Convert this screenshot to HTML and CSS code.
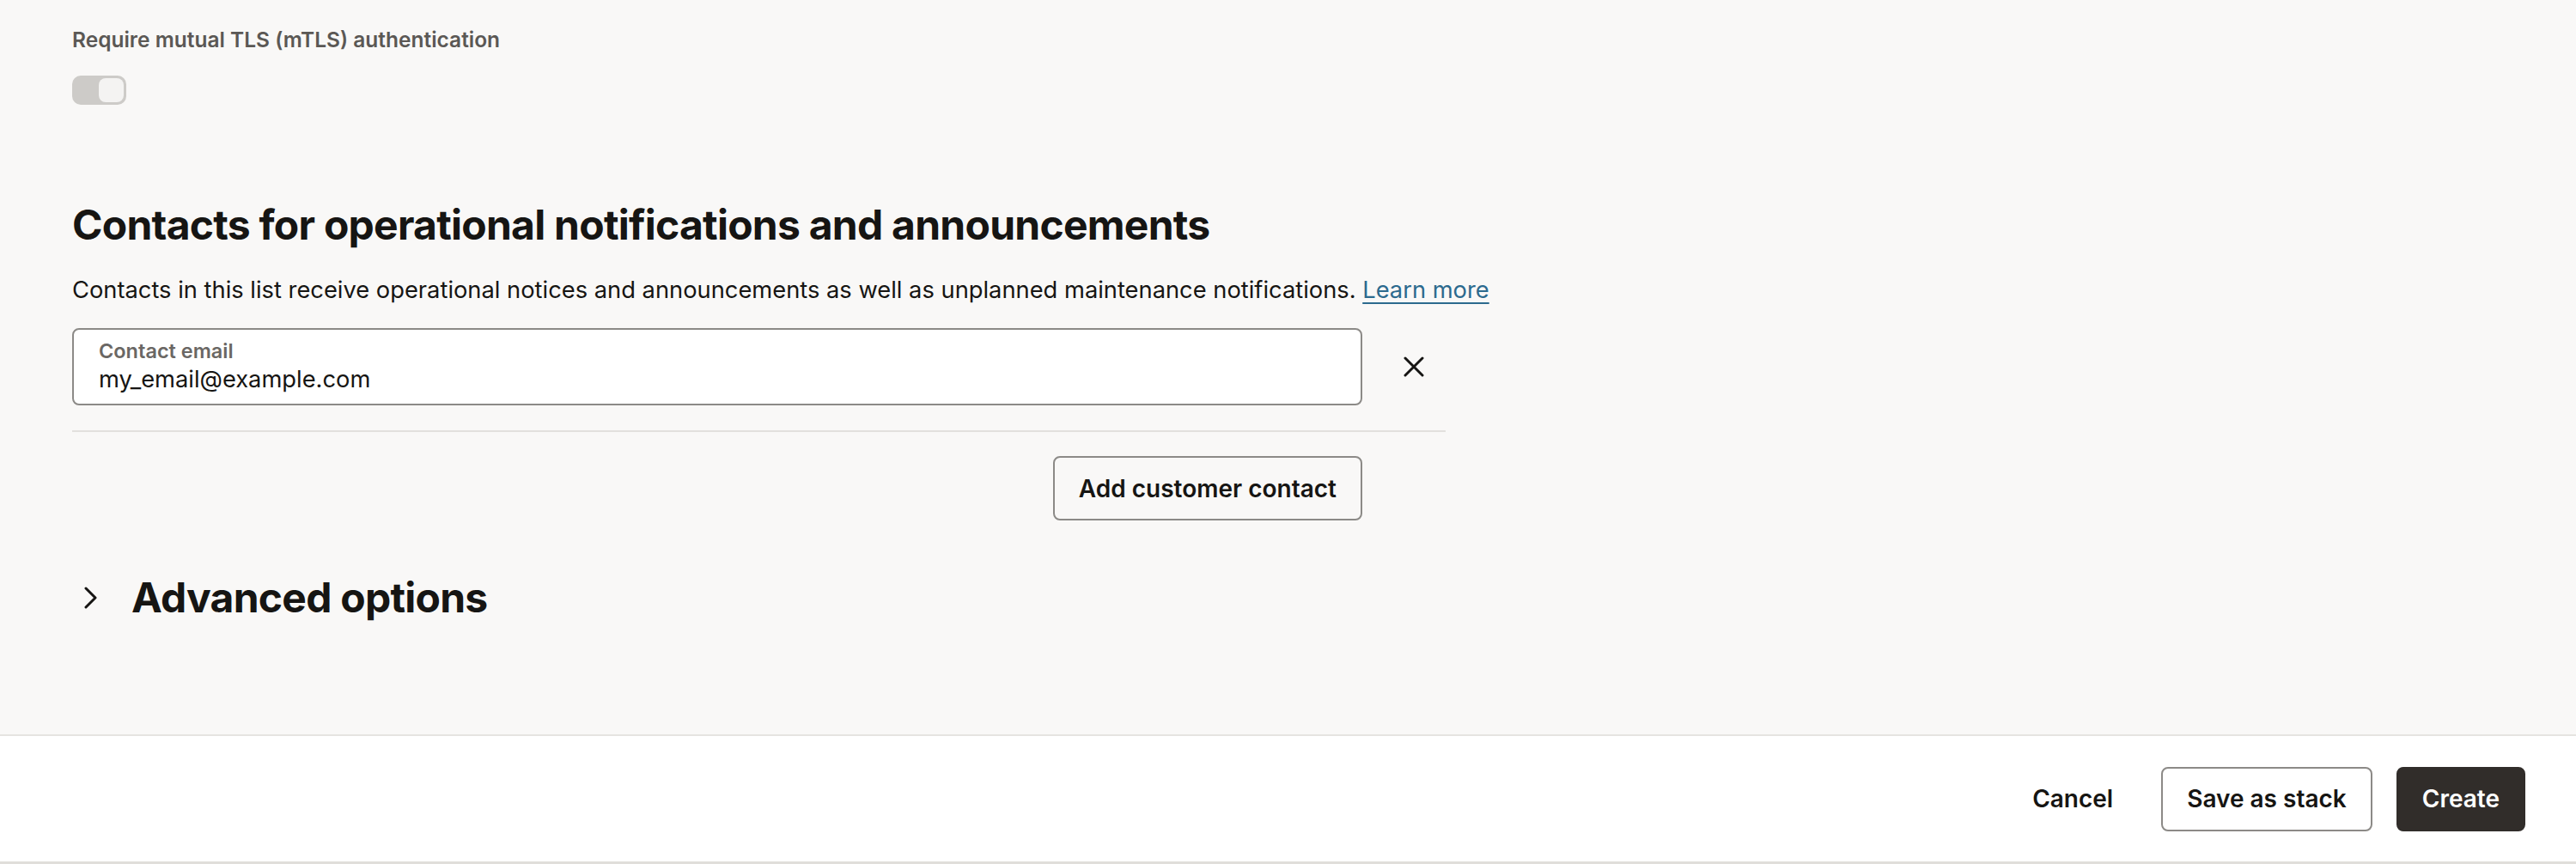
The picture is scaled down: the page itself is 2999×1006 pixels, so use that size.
FILE: index.html
```html
<!DOCTYPE html>
<html lang="en">
<head>
<meta charset="utf-8">
<title>Create</title>
<link rel="stylesheet" href="styles.css">
</head>
<body>
<div class="page">
  <main class="content">
    <section class="field">
      <div class="field-label">Require mutual TLS (mTLS) authentication</div>
      <div class="switch"><span class="knob"></span></div>
    </section>

    <section class="contacts">
      <h2 class="section-title">Contacts for operational notifications and announcements</h2>
      <p class="section-desc">Contacts in this list receive operational notices and announcements as well as unplanned maintenance notifications. <a class="link" href="#">Learn more</a></p>
      <div class="contact-list">
        <div class="contact-row">
          <div class="input">
            <span class="input-label">Contact email</span>
            <span class="input-value">my_email@example.com</span>
          </div>
          <button class="icon-btn" aria-label="Remove">
            <svg width="24" height="24" viewBox="0 0 24 24"><path d="M2 2 L22 22 M22 2 L2 22" stroke="#161513" stroke-width="3" stroke-linecap="round" fill="none"/></svg>
          </button>
        </div>
        <div class="add-row">
          <button class="btn btn-outline">Add customer contact</button>
        </div>
      </div>
    </section>

    <section class="advanced">
      <svg class="chevron" width="16" height="26" viewBox="0 0 16 26"><path d="M2 2 L13 13 L2 24" stroke="#161513" stroke-width="3" fill="none" stroke-linecap="round" stroke-linejoin="round"/></svg>
      <h2 class="section-title adv-title">Advanced options</h2>
    </section>
  </main>

  <footer class="footer">
    <button class="btn btn-text">Cancel</button>
    <button class="btn btn-outline footer-btn">Save as stack</button>
    <button class="btn btn-primary footer-btn">Create</button>
  </footer>
</div>
</body>
</html>
```

FILE: styles.css
```css
* { box-sizing: border-box; }
html, body {
  margin: 0;
  padding: 0;
  background: #f9f8f7;
  font-family: Inter, "Noto Sans", "Liberation Sans", sans-serif;
  color: #161513;
}
.page {
  display: flex;
  flex-direction: column;
  height: 1006px;
}
.content {
  flex: 1;
  padding: 31px 0 0 84px;
}
.field-label {
  font-size: 24.5px;
  font-weight: 600;
  color: #5b5855;
  line-height: 30px;
}
.switch {
  margin-top: 27px;
  width: 63px;
  height: 34px;
  border-radius: 10px;
  background: #cdcbc8;
  display: flex;
  align-items: center;
  justify-content: flex-end;
  padding: 0 3px;
}
.knob {
  width: 29px;
  height: 28px;
  border-radius: 8px;
  background: #f4f3f2;
}
.contacts { margin-top: 112px; }
.section-title {
  margin: 0;
  font-size: 48px;
  font-weight: 700;
  line-height: 56px;
  letter-spacing: -0.75px;
  color: #161513;
}
.section-desc {
  margin: 32px 0 0;
  font-size: 27.3px;
  line-height: 32px;
  color: #161513;
}
.link {
  color: #2c6a8e;
  text-decoration: underline;
  text-underline-offset: 5px;
  text-decoration-thickness: 2px;
}
.contact-list { width: 1599px; }
.contact-row {
  margin-top: 28px;
  display: flex;
  align-items: center;
  padding-bottom: 29px;
  border-bottom: 2px solid #e2e0dd;
}
.input {
  width: 1502px;
  height: 90px;
  background: #ffffff;
  border: 2px solid #8c8a87;
  border-radius: 8px;
  padding: 11px 29px 0;
  display: flex;
  flex-direction: column;
}
.input-label {
  font-size: 23.5px;
  font-weight: 600;
  line-height: 28px;
  color: #6a6764;
}
.input-value {
  font-size: 27.3px;
  line-height: 37px;
  color: #161513;
}
.icon-btn {
  flex: 1;
  background: none;
  border: 0;
  padding: 0 0 0 22px;
  display: flex;
  justify-content: center;
  align-items: center;
  height: 60px;
}
.add-row {
  display: flex;
  padding: 28px 97px 0 0;
  justify-content: flex-end;
}
.btn {
  font-family: Inter, "Noto Sans", "Liberation Sans", sans-serif;
  font-size: 28px;
  font-weight: 600;
  color: #161513;
  height: 75px;
  border-radius: 8px;
  padding: 0 28px;
  cursor: pointer;
}
.btn-outline {
  background: transparent;
  border: 2px solid #8c8a87;
}
.advanced {
  margin-top: 62px;
  display: flex;
  align-items: center;
  gap: 39px;
  padding-left: 14px;
}
.footer {
  height: 151px;
  background: #ffffff;
  border-top: 2px solid #e6e4e1;
  border-bottom: 3px solid #e0deda;
  display: flex;
  justify-content: flex-end;
  align-items: center;
  gap: 28px;
  padding: 0 59px 0 0;
}
.btn-text {
  background: none;
  border: 0;
  padding: 0 28px 0 32px;
}
.footer-btn { background: #ffffff; }
.btn-primary {
  background: #312d2a;
  border: 2px solid #312d2a;
  color: #ffffff;
}
```
